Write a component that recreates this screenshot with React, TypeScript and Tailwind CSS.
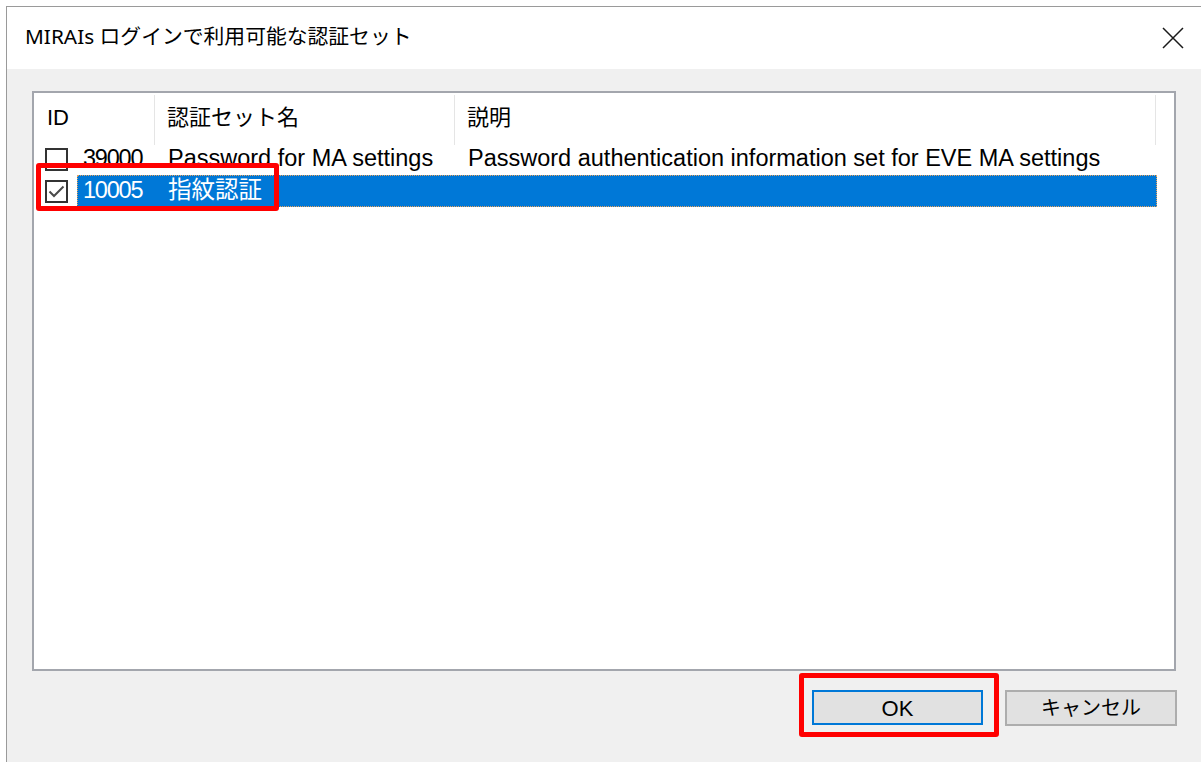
type AuthSet = {
  id: string;
  name: string;
  description: string;
  checked: boolean;
  selected: boolean;
};

const authSets: AuthSet[] = [
  {
    id: '39000',
    name: 'Password for MA settings',
    description: 'Password authentication information set for EVE MA settings',
    checked: false,
    selected: false,
  },
  {
    id: '10005',
    name: '指紋認証',
    description: '',
    checked: true,
    selected: true,
  },
];

const listFont = {
  fontFamily: '"Liberation Sans", "Noto Sans CJK JP", sans-serif',
};

function CheckBox({ checked }: { checked: boolean }) {
  return (
    <div className="w-[23px] h-[23px] border-2 border-[#333333] bg-white shrink-0 flex items-center justify-center">
      {checked && (
        <svg width="19" height="19" viewBox="0 0 19 19">
          <polyline
            points="2.5,9.5 7,14 16.5,4.5"
            fill="none"
            stroke="#4a4a4a"
            strokeWidth="2"
          />
        </svg>
      )}
    </div>
  );
}

function Row({ item }: { item: AuthSet }) {
  return (
    <div className="flex items-center h-8">
      <div className="pl-[11px] w-[43px] shrink-0 flex items-center">
        <CheckBox checked={item.checked} />
      </div>
      <div
        className={
          item.selected
            ? 'flex items-center h-8 w-[1080px] bg-[#0078d7] text-white border border-dotted border-[#e9a25b]'
            : 'flex items-center h-8 w-[1080px] text-black border border-transparent'
        }
      >
        <div className="w-[78px] shrink-0 pl-[5px] tracking-[-1.2px]">{item.id}</div>
        <div className="w-[300px] shrink-0 pl-[12px] whitespace-nowrap">{item.name}</div>
        <div className="pl-[12px] whitespace-nowrap">{item.description}</div>
      </div>
    </div>
  );
}

function CloseIcon() {
  return (
    <svg width="22" height="22" viewBox="0 0 22 22">
      <path d="M1 1 L21 21 M21 1 L1 21" stroke="#1a1a1a" strokeWidth="1.5" fill="none" />
    </svg>
  );
}

export default function App() {
  return (
    <div className="w-[1201px] h-[762px] bg-white pl-[6px] pt-[6px] overflow-hidden relative">
      <div className="h-full border-l border-t border-[#9a9a9a] flex flex-col">
        {/* title bar */}
        <div
          className="h-[62px] bg-white flex items-center justify-between pl-[18px] pr-[17px] shrink-0"
          style={{ fontFamily: '"Noto Sans", "Noto Sans CJK JP", sans-serif' }}
        >
          <span className="text-[20.8px] text-black -mt-[2px]">MIRAIs ログインで利用可能な認証セット</span>
          <CloseIcon />
        </div>

        {/* body */}
        <div className="flex-1 bg-[#f0f0f0] pl-[25px] pr-[24px] pt-[22px]">
          <div
            className="w-[1144px] h-[580px] bg-white border-2 border-[#a3a6ad] text-[23.5px] leading-none"
            style={listFont}
          >
            <div className="flex h-[50px] items-center text-black text-[22px]">
              <div className="w-[121px] h-full flex items-center pl-[13px] border-r border-[#e5e5e5] mt-[4px]">
                <span className="-mt-[4px]">ID</span>
              </div>
              <div className="w-[300px] h-full flex items-center pl-[12px] border-r border-[#e5e5e5] mt-[4px]">
                <span className="-mt-[4px]">認証セット名</span>
              </div>
              <div className="w-[701px] h-full flex items-center pl-[12px] border-r border-[#e5e5e5] mt-[4px]">
                <span className="-mt-[4px]">説明</span>
              </div>
            </div>
            {authSets.map((item) => (
              <Row key={item.id} item={item} />
            ))}
          </div>

          <div className="flex justify-end gap-[22px] mt-[19px]" style={listFont}>
            <button className="w-[171px] h-[35px] bg-[#e1e1e1] border-2 border-[#0078d7] text-black text-[22px]">
              OK
            </button>
            <button className="w-[172px] h-[36px] bg-[#e1e1e1] border-2 border-[#adadad] text-black text-[20px]">
              キャンセル
            </button>
          </div>
        </div>
      </div>

      {/* red callouts */}
      <div className="absolute left-[36px] top-[163px] w-[243px] h-[48px] border-[5px] border-[#ff0000] rounded-[3px]" />
      <div className="absolute left-[799px] top-[673px] w-[200px] h-[64px] border-[5px] border-[#ff0000] rounded-[3px]" />
    </div>
  );
}
